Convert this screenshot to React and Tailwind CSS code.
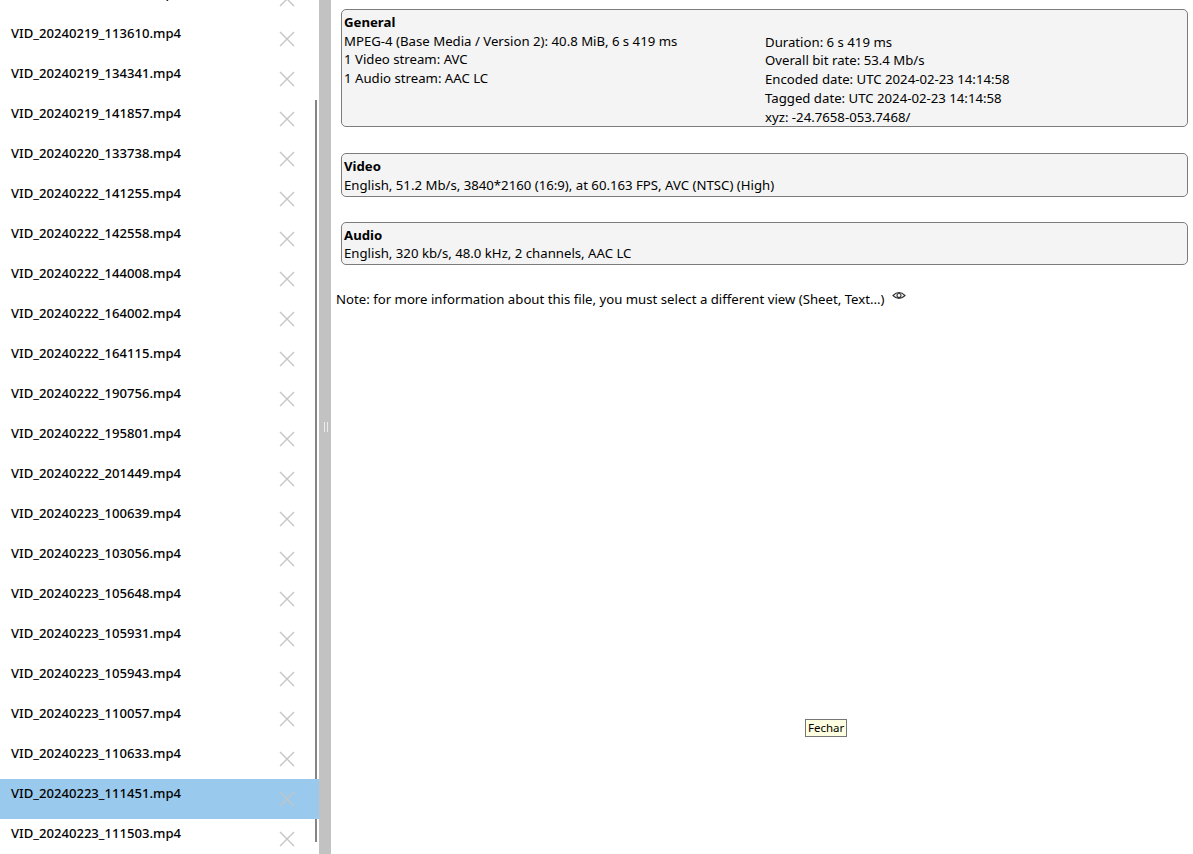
import React from "react";

const files = [
  "VID_20240219_104512.mp4",
  "VID_20240219_113610.mp4",
  "VID_20240219_134341.mp4",
  "VID_20240219_141857.mp4",
  "VID_20240220_133738.mp4",
  "VID_20240222_141255.mp4",
  "VID_20240222_142558.mp4",
  "VID_20240222_144008.mp4",
  "VID_20240222_164002.mp4",
  "VID_20240222_164115.mp4",
  "VID_20240222_190756.mp4",
  "VID_20240222_195801.mp4",
  "VID_20240222_201449.mp4",
  "VID_20240223_100639.mp4",
  "VID_20240223_103056.mp4",
  "VID_20240223_105648.mp4",
  "VID_20240223_105931.mp4",
  "VID_20240223_105943.mp4",
  "VID_20240223_110057.mp4",
  "VID_20240223_110633.mp4",
  "VID_20240223_111451.mp4",
  "VID_20240223_111503.mp4",
];

function XIcon() {
  return (
    <svg width="16" height="16" viewBox="0 0 16 16" className="shrink-0">
      <path d="M1 1 L15 15 M15 1 L1 15" stroke="#c4c4c4" strokeWidth="1.4" fill="none" />
    </svg>
  );
}

function Eye() {
  return (
    <svg width="14" height="9" viewBox="0 0 14 9" className="ml-[7px] mb-[8px] shrink-0">
      <path d="M1 4.5 Q7 -1.5 13 4.5 Q7 10.5 1 4.5 Z" stroke="#333" strokeWidth="1.1" fill="none" />
      <circle cx="7" cy="4.5" r="2" stroke="#333" strokeWidth="1.1" fill="none" />
    </svg>
  );
}

export default function App() {
  return (
    <div
      className="relative flex h-[854px] w-[1193px] overflow-hidden bg-white text-black"
      style={{ fontFamily: '"Noto Sans", "Open Sans", sans-serif' }}
    >
      {/* Left list */}
      <div className="relative w-[319px] shrink-0 overflow-hidden">
        <div className="mt-[-21px] flex flex-col">
          {files.map((f, i) => (
            <div
              key={f}
              className={`flex h-[40px] items-start justify-between pl-[11px] pr-[24px] ${
                i === 20 ? "bg-[#99c9ec]" : ""
              }`}
            >
              <span className="pt-[4px] text-[13.1px] font-medium leading-[20px]">{f}</span>
              <span className="pt-[12px]">
                <XIcon />
              </span>
            </div>
          ))}
        </div>
        {/* scrollbar thumb line */}
        <div className="absolute left-[315px] top-[100px] h-[679px] w-[2px] bg-[#858585]" />
        <div className="absolute left-[315px] top-[819px] h-[23px] w-[2px] bg-[#858585]" />
      </div>

      {/* Splitter */}
      <div className="flex w-[12px] shrink-0 items-center justify-center bg-[#c2c2c2]">
        <div className="flex gap-[2px] pl-[1px]">
          <div className="h-[10px] w-[1px] bg-[#ececec]" />
          <div className="h-[10px] w-[1px] bg-[#ececec]" />
        </div>
      </div>

      {/* Right panel */}
      <div className="flex flex-1 flex-col pl-[10px] pr-[5px] pt-[9px] text-[13.2px] leading-[18.7px]">
        <div className="rounded-[5px] border border-[#7c7c7c] bg-[#f4f4f4] px-[2px] pt-[3px]">
          <div className="flex">
            <div className="w-[421px] shrink-0">
              <div className="font-bold">General</div>
              <div>MPEG-4 (Base Media / Version 2): 40.8 MiB, 6 s 419 ms</div>
              <div>1 Video stream: AVC</div>
              <div>1 Audio stream: AAC LC</div>
            </div>
            <div className="pt-[1px]">
              <div>&nbsp;</div>
              <div>Duration: 6 s 419 ms</div>
              <div>Overall bit rate: 53.4 Mb/s</div>
              <div>Encoded date: UTC 2024-02-23 14:14:58</div>
              <div>Tagged date: UTC 2024-02-23 14:14:58</div>
              <div>xyz: -24.7658-053.7468/</div>
            </div>
          </div>
        </div>

        <div className="mt-[26px] rounded-[5px] border border-[#7c7c7c] bg-[#f4f4f4] px-[2px] pb-[1px] pt-[3px]">
          <div className="font-bold">Video</div>
          <div>English, 51.2 Mb/s, 3840*2160 (16:9), at 60.163 FPS, AVC (NTSC) (High)</div>
        </div>

        <div className="mt-[25px] rounded-[5px] border border-[#7c7c7c] bg-[#f4f4f4] px-[2px] pb-[1px] pt-[3px]">
          <div className="font-bold">Audio</div>
          <div>English, 320 kb/s, 48.0 kHz, 2 channels, AAC LC</div>
        </div>

        <div className="ml-[-5px] mt-[25px] flex items-center">
          <span>Note: for more information about this file, you must select a different view (Sheet, Text...)</span>
          <Eye />
        </div>
      </div>

      {/* Tooltip */}
      <div className="absolute left-[805px] top-[719px] border border-[#767676] bg-[#ffffe1] px-[2px] text-[11.5px] leading-[16px]">
        Fechar
      </div>
    </div>
  );
}
